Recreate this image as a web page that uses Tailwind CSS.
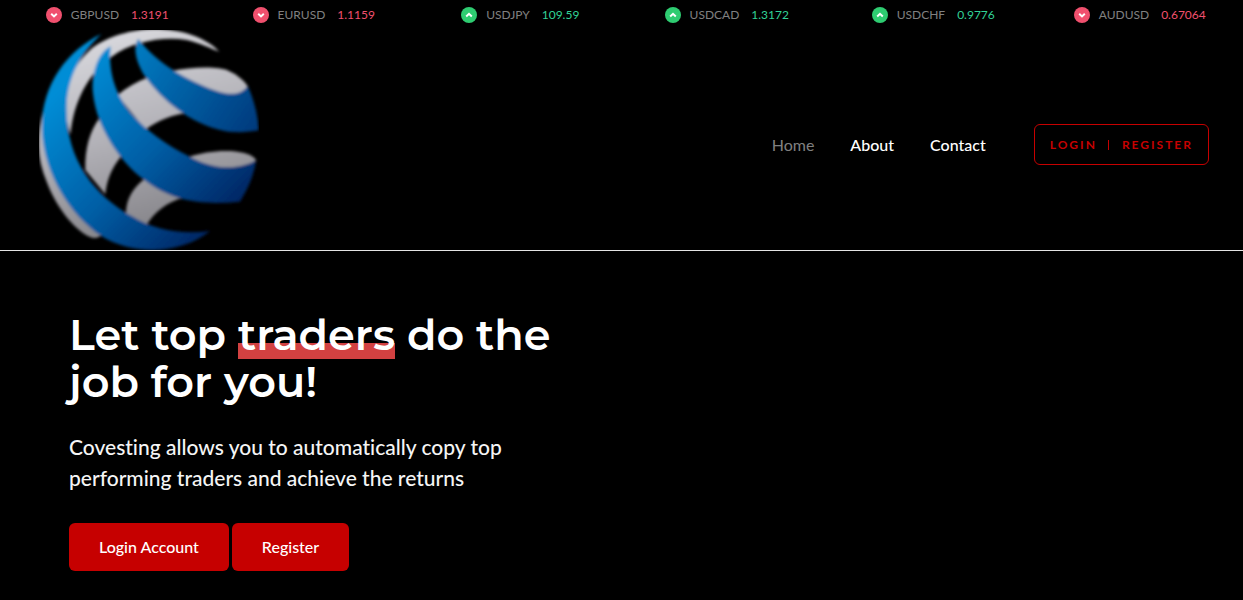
<!DOCTYPE html>
<html lang="en">
<head>
    <meta charset="UTF-8">
    <meta name="viewport" content="width=device-width, initial-scale=1.0">
    <title>Covesting</title>

    <!-- Tailwind CSS -->
    <script src="https://cdn.jsdelivr.net/npm/@tailwindcss/browser@4"></script>
</head>
<body class="min-h-screen bg-black text-white font-[Lato,sans-serif]">

    <!-- Shared ticker icons -->
    <svg class="hidden" aria-hidden="true">
        <symbol id="arrow-up" viewBox="0 0 16 16">
            <circle cx="8" cy="8" r="8" fill="#2ecc71"/>
            <path d="M5.2 9.4 8 6.8l2.8 2.6" fill="none" stroke="#fff" stroke-width="2"/>
        </symbol>
        <symbol id="arrow-down" viewBox="0 0 16 16">
            <circle cx="8" cy="8" r="8" fill="#f0506e"/>
            <path d="M5.2 6.8 8 9.4l2.8-2.6" fill="none" stroke="#fff" stroke-width="2"/>
        </symbol>
    </svg>

    <!-- Ticker -->
    <ul class="grid grid-cols-6 h-[30px] items-center pl-1 text-xs text-[#808080]">
        <li class="flex items-center justify-center">
            <svg class="size-4 mr-[9px]"><use href="#arrow-down"/></svg>GBPUSD<span class="ml-3 text-[#f0506e]">1.3191</span>
        </li>
        <li class="flex items-center justify-center">
            <svg class="size-4 mr-[9px]"><use href="#arrow-down"/></svg>EURUSD<span class="ml-3 text-[#f0506e]">1.1159</span>
        </li>
        <li class="flex items-center justify-center">
            <svg class="size-4 mr-[9px]"><use href="#arrow-up"/></svg>USDJPY<span class="ml-3 text-[#32d296]">109.59</span>
        </li>
        <li class="flex items-center justify-center">
            <svg class="size-4 mr-[9px]"><use href="#arrow-up"/></svg>USDCAD<span class="ml-3 text-[#32d296]">1.3172</span>
        </li>
        <li class="flex items-center justify-center">
            <svg class="size-4 mr-[9px]"><use href="#arrow-up"/></svg>USDCHF<span class="ml-3 text-[#32d296]">0.9776</span>
        </li>
        <li class="flex items-center justify-center">
            <svg class="size-4 mr-[9px]"><use href="#arrow-down"/></svg>AUDUSD<span class="ml-3 text-[#f0506e]">0.67064</span>
        </li>
    </ul>

    <!-- Header -->
    <header class="flex items-center justify-between border-b border-[#e5e5e5] pl-[39px] pr-[34px]">
        <a href="#" aria-label="Covesting home">
            <svg class="size-[220px]" viewBox="27 15 660 660">
                <defs>
                    <linearGradient id="blue" gradientUnits="userSpaceOnUse" x1="110" y1="170" x2="570" y2="620">
                        <stop offset="0" stop-color="#008dd6"/>
                        <stop offset=".5" stop-color="#005fa6"/>
                        <stop offset="1" stop-color="#002260"/>
                    </linearGradient>
                    <linearGradient id="blue-top" gradientUnits="userSpaceOnUse" x1="310" y1="70" x2="680" y2="320">
                        <stop offset="0" stop-color="#007cc2"/>
                        <stop offset="1" stop-color="#00397c"/>
                    </linearGradient>
                    <linearGradient id="silver" gradientUnits="userSpaceOnUse" x1="260" y1="20" x2="420" y2="600">
                        <stop offset="0" stop-color="#d8d8dd"/>
                        <stop offset=".5" stop-color="#b3b2b8"/>
                        <stop offset="1" stop-color="#858489"/>
                    </linearGradient>
                    <filter id="soft"><feGaussianBlur stdDeviation="4"/></filter>
                </defs>
                <g filter="url(#soft)">
                    <g fill="url(#silver)">
                        <path d="M568 80C530 38 450 10 365 12C290 16 220 40 180 75C100 150 90 240 122 328C130 230 175 145 245 95C310 48 400 34 470 45C510 54 545 72 568 80Z"/>
                        <path d="M42 250C18 330 20 400 50 470C80 550 140 625 190 639C202 640 208 636 214 630L120 480L60 300Z"/>
                        <path d="M262 211C290 188 320 170 356 157L475 263C430 268 385 285 346 314Z"/>
                        <path d="M166 435C164 370 180 320 206 282L272 395C245 430 230 465 226 508Z"/>
                        <path d="M288 566C288 520 310 488 346 460L460 518C412 530 372 562 348 602Z"/>
                        <path d="M425 138C480 127 560 122 595 137C625 150 645 170 653 184L640 215L560 210Z"/>
                        <path d="M478 396C540 374 650 368 679 405L650 440L560 435Z"/>
                    </g>
                    <g fill="url(#blue)">
                        <path d="M215 27C110 75 30 185 36 320C44 450 120 570 215 634C310 692 450 690 540 618C450 630 370 612 310 576C190 510 105 400 110 240C113 150 160 75 215 27Z"/>
                        <path d="M242 64C200 85 184 150 189 205C200 310 270 410 340 463C430 535 530 540 630 530C655 490 672 450 678 406C620 440 540 430 480 395C410 360 345 315 300 260C250 200 235 130 242 64Z"/>
                    </g>
                    <path fill="url(#blue-top)" d="M325 41C305 70 322 125 355 168C410 240 500 305 595 320C630 323 660 321 686 316C684 270 672 225 653 182C635 210 600 212 560 198C470 165 380 115 325 41Z"/>
                </g>
            </svg>
        </a>

        <div class="flex items-center">
            <nav class="flex gap-9 text-base mt-2.5">
                <a href="#" class="text-[#808080]">Home</a>
                <a href="#" class="font-medium">About</a>
                <a href="#" class="font-medium">Contact</a>
            </nav>
            <div class="ml-12 flex items-center gap-[11px] rounded-md border border-[#c60000] px-[15px] pt-0.5 h-[41px] mt-2 text-xs font-bold tracking-[2px] text-[#c60000]">
                <a href="#">LOGIN</a>
                <span class="h-2.5 w-px bg-[#c60000]"></span>
                <a href="#" class="ml-0.5">REGISTER</a>
            </div>
        </div>
    </header>

    <!-- Hero -->
    <main class="px-[69px] pt-[60px] pb-7">
        <h1 class="max-w-[500px] font-[Montserrat,sans-serif] text-[43px] leading-[47px] font-semibold">
            Let top <span class="bg-[linear-gradient(to_top,transparent_4%,#d24141_4%,#d24141_34%,transparent_34%)]">traders</span> do the<br>job for you!
        </h1>
        <p class="mt-[26px] max-w-[460px] text-[21px] leading-[31px] font-medium text-[#f5f5f5] [font-variant-ligatures:none]">
            Covesting allows you to automatically copy top performing traders and achieve the returns
        </p>
        <div class="mt-[30px] flex gap-[3px]">
            <a href="#" class="rounded-md bg-[#c60000] px-[30px] py-3 text-base font-medium">Login Account</a>
            <a href="#" class="rounded-md bg-[#c60000] px-[30px] py-3 text-base font-medium">Register</a>
        </div>
    </main>

</body>
</html>
